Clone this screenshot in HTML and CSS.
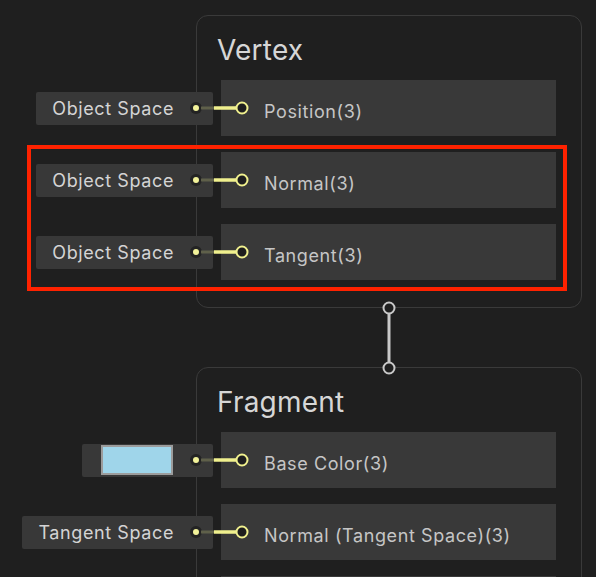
FILE: index.html
```html
<!DOCTYPE html>
<html lang="en">
<head>
<meta charset="utf-8">
<title>Master Stack</title>
<link rel="stylesheet" href="styles.css">
</head>
<body>
<div class="canvas">
  <section class="node">
    <h2 class="node-title">Vertex</h2>
    <div class="rows">
      <div class="row">
        <div class="port-slot"><div class="port"><span class="port-text">Object Space</span></div></div>
        <div class="field">Position(3)</div>
        <svg class="wire" width="66" height="20" viewBox="0 0 66 20"><circle cx="10" cy="10" r="6" fill="#232323"/><circle cx="10" cy="10" r="3" fill="#f2f29a"/><line x1="15" y1="10" x2="28" y2="10" stroke="#5f604a" stroke-width="3"/><line x1="28" y1="10" x2="50" y2="10" stroke="#f0f08e" stroke-width="3.5"/><circle cx="56" cy="10" r="5.5" fill="#1e1e1e" stroke="#f0f08e" stroke-width="2"/></svg>
      </div>
      <div class="row">
        <div class="port-slot"><div class="port"><span class="port-text">Object Space</span></div></div>
        <div class="field">Normal(3)</div>
        <svg class="wire" width="66" height="20" viewBox="0 0 66 20"><circle cx="10" cy="10" r="6" fill="#232323"/><circle cx="10" cy="10" r="3" fill="#f2f29a"/><line x1="15" y1="10" x2="28" y2="10" stroke="#5f604a" stroke-width="3"/><line x1="28" y1="10" x2="50" y2="10" stroke="#f0f08e" stroke-width="3.5"/><circle cx="56" cy="10" r="5.5" fill="#1e1e1e" stroke="#f0f08e" stroke-width="2"/></svg>
      </div>
      <div class="row">
        <div class="port-slot"><div class="port"><span class="port-text">Object Space</span></div></div>
        <div class="field">Tangent(3)</div>
        <svg class="wire" width="66" height="20" viewBox="0 0 66 20"><circle cx="10" cy="10" r="6" fill="#232323"/><circle cx="10" cy="10" r="3" fill="#f2f29a"/><line x1="15" y1="10" x2="28" y2="10" stroke="#5f604a" stroke-width="3"/><line x1="28" y1="10" x2="50" y2="10" stroke="#f0f08e" stroke-width="3.5"/><circle cx="56" cy="10" r="5.5" fill="#1e1e1e" stroke="#f0f08e" stroke-width="2"/></svg>
      </div>
    </div>
  </section>

  <div class="link">
    <svg class="link-svg" width="16" height="76" viewBox="0 0 16 76"><line x1="8" y1="14" x2="8" y2="62" stroke="#c9c9c9" stroke-width="3"/><circle cx="8" cy="8" r="5.5" fill="#1f1f1f" stroke="#c9c9c9" stroke-width="2"/><circle cx="8" cy="68" r="5.5" fill="#1f1f1f" stroke="#c9c9c9" stroke-width="2"/></svg>
  </div>

  <section class="node">
    <h2 class="node-title">Fragment</h2>
    <div class="rows">
      <div class="row">
        <div class="port-slot"><div class="port port-color"><span class="swatch"></span></div></div>
        <div class="field">Base Color(3)</div>
        <svg class="wire" width="66" height="20" viewBox="0 0 66 20"><circle cx="10" cy="10" r="6" fill="#232323"/><circle cx="10" cy="10" r="3" fill="#f2f29a"/><line x1="15" y1="10" x2="28" y2="10" stroke="#5f604a" stroke-width="3"/><line x1="28" y1="10" x2="50" y2="10" stroke="#f0f08e" stroke-width="3.5"/><circle cx="56" cy="10" r="5.5" fill="#1e1e1e" stroke="#f0f08e" stroke-width="2"/></svg>
      </div>
      <div class="row">
        <div class="port-slot"><div class="port"><span class="port-text">Tangent Space</span></div></div>
        <div class="field">Normal (Tangent Space)(3)</div>
        <svg class="wire" width="66" height="20" viewBox="0 0 66 20"><circle cx="10" cy="10" r="6" fill="#232323"/><circle cx="10" cy="10" r="3" fill="#f2f29a"/><line x1="15" y1="10" x2="28" y2="10" stroke="#5f604a" stroke-width="3"/><line x1="28" y1="10" x2="50" y2="10" stroke="#f0f08e" stroke-width="3.5"/><circle cx="56" cy="10" r="5.5" fill="#1e1e1e" stroke="#f0f08e" stroke-width="2"/></svg>
      </div>
      <div class="row">
        <div class="port-slot"></div>
        <div class="field"></div>
      </div>
    </div>
  </section>

  <div class="highlight"></div>
</div>
</body>
</html>
```

FILE: styles.css
```css
html, body {
  margin: 0;
  padding: 0;
  background: #1f1f1f;
  overflow: hidden;
}

body {
  width: 596px;
  height: 577px;
  font-family: Inter, "Noto Sans", "DejaVu Sans", sans-serif;
}

.canvas {
  position: relative;
  padding: 15px 0 0 196px;
  height: 577px;
  box-sizing: border-box;
}

.node {
  box-sizing: border-box;
  width: 386px;
  border: 1px solid #3a3a3a;
  border-radius: 12px;
  background: #1f1f1f;
  padding: 17px 25px 27px 24px;
}

.node-title {
  margin: 0 0 12px -4px;
  font-size: 28px;
  line-height: 35px;
  font-weight: 400;
  letter-spacing: 0.2px;
  color: #d6d6d6;
}

.rows {
  display: flex;
  flex-direction: column;
  gap: 16px;
}

.row {
  position: relative;
  display: flex;
  align-items: center;
  margin-left: -221px;
  height: 56px;
}

.port-slot {
  width: 221px;
  flex: none;
  display: flex;
  justify-content: flex-end;
  padding-right: 8px;
  box-sizing: border-box;
}

.port {
  height: 33px;
  display: flex;
  align-items: center;
  padding: 0 39px 0 16px;
  background: #383838;
  border-radius: 2px;
}

.port-text {
  font-size: 18px;
  letter-spacing: 0.6px;
  color: #d4d4d4;
  white-space: nowrap;
}

.port-color {
  padding: 0 40px 0 19px;
}

.swatch {
  display: block;
  width: 68px;
  height: 26px;
  background: #9fd5ea;
  border: 2px solid #9c9c9c;
}

.field {
  flex: 1;
  height: 56px;
  box-sizing: border-box;
  background: #393939;
  display: flex;
  align-items: center;
  padding: 6px 0 0 43px;
  font-size: 18px;
  letter-spacing: 0.6px;
  color: #c6c6c6;
  white-space: nowrap;
}

.wire {
  position: absolute;
  left: 186px;
  top: 18px;
}

.link {
  position: relative;
  height: 59px;
}

.link-svg {
  position: absolute;
  left: 185px;
  top: -8px;
}

.highlight {
  position: absolute;
  left: 27px;
  top: 145px;
  width: 540px;
  height: 146px;
  box-sizing: border-box;
  border: 4px solid #ff2200;
}
```
